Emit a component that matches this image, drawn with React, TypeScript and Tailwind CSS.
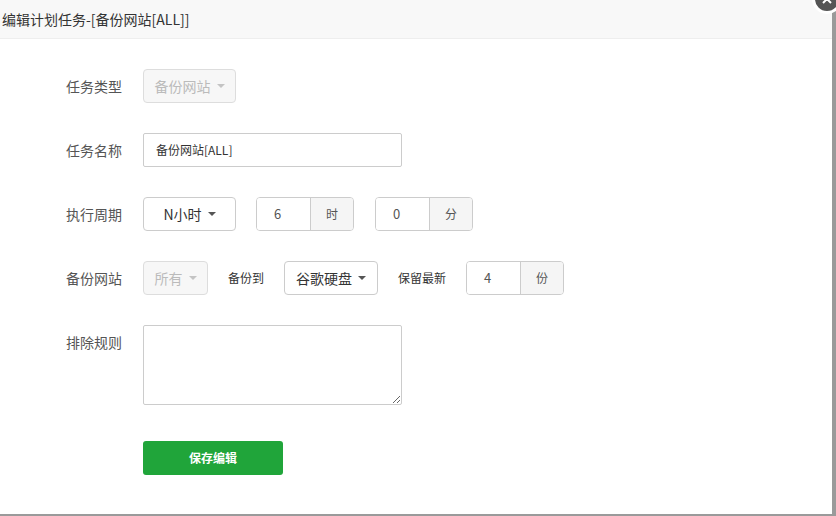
import React from "react";

const Caret: React.FC<{ light?: boolean }> = ({ light }) => (
  <span
    className={`ml-1.5 inline-block w-0 h-0 border-x-[4px] border-x-transparent border-t-[4px] ${
      light ? "border-t-[#c4c4c4]" : "border-t-[#555]"
    }`}
  />
);

const Select: React.FC<{ text: string; width: string; disabled?: boolean }> = ({
  text,
  width,
  disabled,
}) => (
  <div
    className={`${width} h-[34px] flex items-center justify-center rounded-[4px] border text-[14px] ${
      disabled
        ? "bg-[#f7f7f7] border-[#ddd] text-[#bbb]"
        : "bg-white border-[#ccc] text-[#333]"
    }`}
  >
    {text}
    <Caret light={disabled} />
  </div>
);

const InputGroup: React.FC<{ value: string; unit: string }> = ({ value, unit }) => (
  <div className="flex h-[34px] rounded-[4px] border border-[#ccc] overflow-hidden text-[13px] text-[#555]">
    <div className="w-[53px] flex items-center pl-[17px] bg-white">{value}</div>
    <div className="w-[43px] flex items-center justify-center border-l border-[#ccc] bg-[#f5f5f5] text-[12px]">
      {unit}
    </div>
  </div>
);

const Row: React.FC<{ label: string; top?: boolean; children: React.ReactNode }> = ({
  label,
  top,
  children,
}) => (
  <div className={`flex ${top ? "items-start" : "items-center"}`}>
    <label
      className={`w-[143px] shrink-0 pl-[66px] text-[14px] text-[#555] ${top ? "pt-[7px]" : ""}`}
    >
      {label}
    </label>
    {children}
  </div>
);

export default function App() {
  return (
    <div className="w-[836px] h-[516px] bg-[#9a9a9a] font-['Noto_Sans_CJK_SC',sans-serif] leading-[20px] relative overflow-hidden">
      <div className="w-[832px] h-[514px] bg-white flex flex-col">
        <div className="h-[39px] shrink-0 bg-[#f8f8f8] border-b border-[#eee] flex items-center pl-[2px] text-[14px] text-[#333]">
          编辑计划任务-[备份网站[ALL]]
        </div>
        <div className="flex flex-col gap-[30px] pt-[30px]">
          <Row label="任务类型">
            <Select text="备份网站" width="w-[93px]" disabled />
          </Row>
          <Row label="任务名称">
            <div className="w-[259px] h-[34px] flex items-center pl-[12px] border border-[#ccc] rounded-[2px] text-[12px] text-[#333]">
              备份网站[ALL]
            </div>
          </Row>
          <Row label="执行周期">
            <Select text="N小时" width="w-[93px]" />
            <div className="ml-[20px]">
              <InputGroup value="6" unit="时" />
            </div>
            <div className="ml-[21px]">
              <InputGroup value="0" unit="分" />
            </div>
          </Row>
          <Row label="备份网站">
            <Select text="所有" width="w-[65px]" disabled />
            <span className="ml-[20px] text-[12px] text-[#333]">备份到</span>
            <div className="ml-[20px]">
              <Select text="谷歌硬盘" width="w-[94px]" />
            </div>
            <span className="ml-[20px] text-[12px] text-[#333]">保留最新</span>
            <div className="ml-[20px]">
              <InputGroup value="4" unit="份" />
            </div>
          </Row>
          <Row label="排除规则" top>
            <textarea className="w-[259px] h-[80px] border border-[#ccc] rounded-[2px] outline-none" />
          </Row>
        </div>
        <div className="pl-[143px] pt-[36px]">
          <button className="w-[140px] h-[34px] rounded-[3px] bg-[#20a53a] text-white text-[12px] font-bold">
            保存编辑
          </button>
        </div>
      </div>
      <div className="absolute -top-[16px] -right-[6px] w-[30px] h-[30px] rounded-full bg-[#555] border-[3px] border-white flex items-end justify-center pb-[6px]">
        <svg width="12" height="12" viewBox="0 0 12 12">
          <path d="M2 2 L10 10 M10 2 L2 10" stroke="white" strokeWidth="2" />
        </svg>
      </div>
    </div>
  );
}
